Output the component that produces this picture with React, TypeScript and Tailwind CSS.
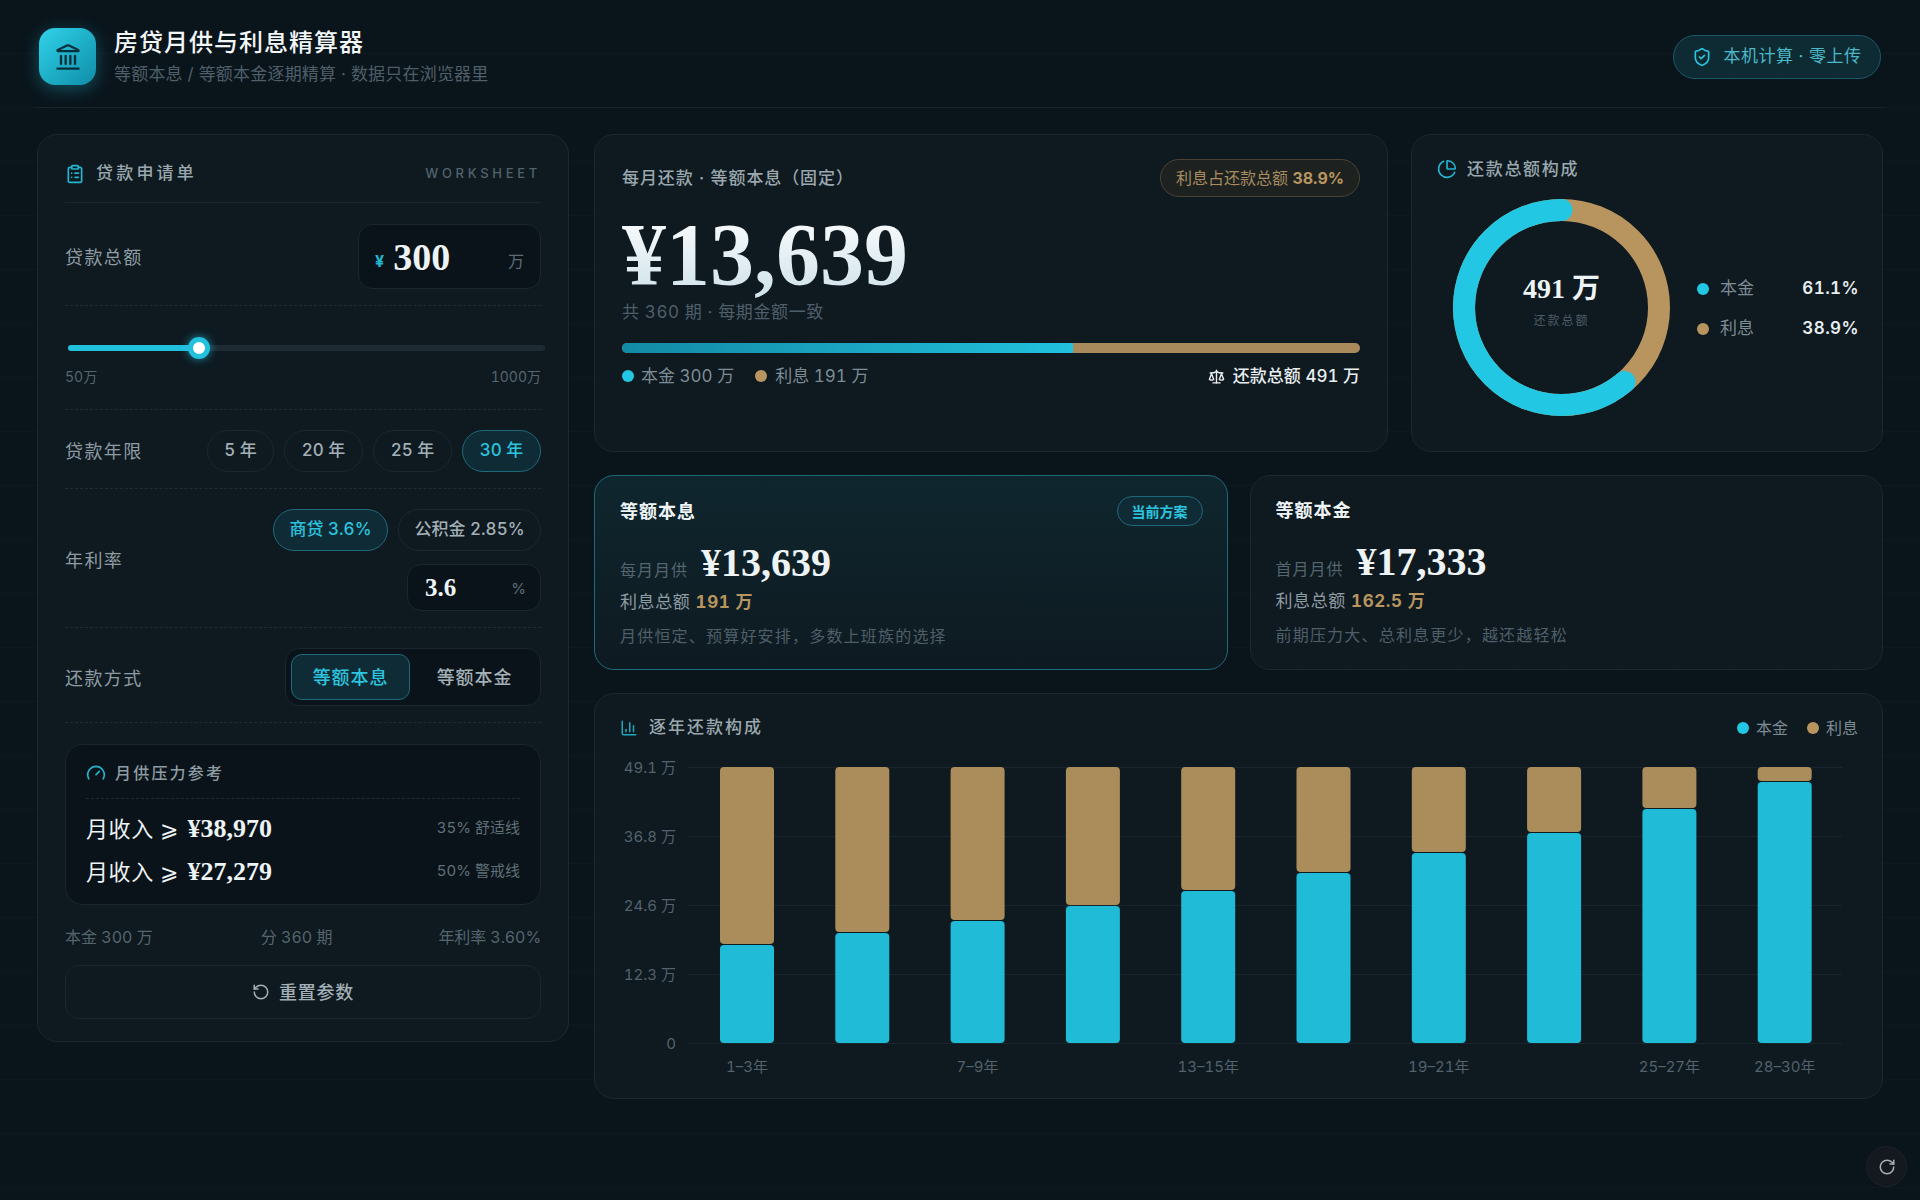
import {
  ChartColumn,
  ChartPie,
  ClipboardList,
  Gauge,
  Landmark,
  RotateCcw,
  RotateCw,
  Scale,
  ShieldCheck,
} from 'lucide-react';

const serif = "font-['Liberation_Serif','Noto_Sans_CJK_SC',serif]";

const yTicks = [
  { label: '49.1 万', y: 12 },
  { label: '36.8 万', y: 81 },
  { label: '24.6 万', y: 150 },
  { label: '12.3 万', y: 219 },
  { label: '0', y: 288 },
];

const principalHeights = [98, 110, 122, 137, 152, 170, 190, 210, 234, 261];
const xLabels = ['1–3年', '', '7–9年', '', '13–15年', '', '19–21年', '', '25–27年', '28–30年'];

function Pill({ children, active, className = '' }: { children: React.ReactNode; active?: boolean; className?: string }) {
  return (
    <div
      className={`flex h-[42px] items-center justify-center rounded-full border text-[17px] font-medium ${
        active ? 'border-[#1f6978] bg-[#0f2c36] text-[#2cc4de]' : 'border-[#1b2830] text-[#a3b0b6]'
      } ${className}`}
    >
      {children}
    </div>
  );
}

function Dot({ color }: { color: string }) {
  return <span className={`size-3 shrink-0 rounded-full ${color}`} />;
}

function IncomeRow({ amount, note }: { amount: string; note: string }) {
  return (
    <div className="flex h-[43px] items-center justify-between">
      <span className={`${serif} flex items-baseline text-[#eef4f6]`}>
        <span className="text-[22px] tracking-[0.6px]">月收入 ⩾&nbsp;</span>
        <span className="ml-[3px] text-[26px] font-bold">{amount}</span>
      </span>
      <span className="text-[15px] text-[#5f7078]">{note}</span>
    </div>
  );
}

function LoanForm() {
  const label = 'mt-[2px] text-[18px] tracking-[1.4px] text-[#8e9ca3]';
  const row = 'border-b border-dashed border-[#1f2c34]';

  return (
    <aside className="w-[532px] shrink-0 self-start rounded-[20px] border border-[#1a2831] bg-[#0e1920] px-[27px] pb-[22px] pt-[18px]">
      {/* Title */}
      <div className="flex h-[50px] items-center justify-between border-b border-[#1a272f] pb-2">
        <div className="flex items-center gap-[11px]">
          <ClipboardList size={20} strokeWidth={2} className="text-[#22b6d0]" />
          <span className="text-[17px] font-medium tracking-[3.2px] text-[#9aa8ae]">贷款申请单</span>
        </div>
        <span className="text-[13px] font-medium tracking-[3.7px] text-[#52636c]">WORKSHEET</span>
      </div>

      {/* Amount */}
      <div className={`flex items-center justify-between pb-[16px] pt-[21px] ${row}`}>
        <span className={label}>贷款总额</span>
        <div className="flex h-[65px] w-[183px] items-center rounded-[14px] border border-[#1a272f] bg-[#0a1319] pl-[16px] pr-[16px]">
          <span className="mt-[8px] text-[16px] font-bold text-[#22b6d0]">¥</span>
          <span className={`${serif} ml-[9px] text-[38px] font-bold leading-none text-[#eef4f6]`}>300</span>
          <span className="ml-auto mt-[8px] text-[16px] text-[#5e6e77]">万</span>
        </div>
      </div>

      {/* Slider */}
      <div className={`h-[104px] pt-[39px] ${row}`}>
        <div className="relative ml-[3px] mr-[-4px] h-[6px] rounded-full bg-[#1f2b32]">
          <div className="h-full w-[132px] rounded-full bg-[#22c1de]" />
          <div className="absolute left-[120px] top-[-8px] size-[22px] rounded-full border-[5px] border-[#22c1de] bg-white shadow-[0_0_10px_rgba(34,193,222,0.7)]" />
        </div>
        <div className="mt-[16px] flex justify-between text-[14px] leading-[20px] text-[#55656e]">
          <span>50万</span>
          <span>1000万</span>
        </div>
      </div>

      {/* Term */}
      <div className={`flex items-center justify-between pb-[16px] pt-[20px] ${row}`}>
        <span className="text-[18px] tracking-[1.4px] text-[#8e9ca3]">贷款年限</span>
        <div className="flex gap-[10px]">
          <Pill className="w-[67px]">5 年</Pill>
          <Pill className="w-[79px]">20 年</Pill>
          <Pill className="w-[79px]">25 年</Pill>
          <Pill active className="w-[79px]">30 年</Pill>
        </div>
      </div>

      {/* Rate */}
      <div className={`flex items-center justify-between pb-[16px] pt-[20px] ${row}`}>
        <span className="text-[18px] tracking-[1.4px] text-[#8e9ca3]">年利率</span>
        <div className="flex flex-col items-end gap-[13px]">
          <div className="flex gap-[10px]">
            <Pill active className="w-[115px]">商贷 3.6%</Pill>
            <Pill className="w-[143px]">公积金 2.85%</Pill>
          </div>
          <div className="flex h-[47px] w-[134px] items-center justify-between rounded-[14px] border border-[#1a272f] bg-[#0a1319] pl-[17px] pr-[14px]">
            <span className={`${serif} text-[25px] font-bold leading-none text-[#eef4f6]`}>3.6</span>
            <span className="mt-[4px] text-[15px] text-[#5e6e77]">%</span>
          </div>
        </div>
      </div>

      {/* Repayment */}
      <div className={`flex items-center justify-between pb-[16px] pt-[20px] ${row}`}>
        <span className={label}>还款方式</span>
        <div className="flex h-[58px] w-[256px] items-center rounded-[14px] border border-[#1a272f] bg-[#0a1319] p-[5px]">
          <div className="flex h-[46px] w-[119px] items-center justify-center rounded-[11px] border border-[#1f6978] bg-[#0f2c36] text-[18px] font-medium tracking-[0.9px] text-[#2cc4de]">
            等额本息
          </div>
          <div className="flex flex-1 items-center justify-center pl-[4px] text-[18px] font-medium tracking-[0.9px] text-[#a3b0b6]">等额本金</div>
        </div>
      </div>

      {/* Income reference */}
      <div className="mt-[21px] rounded-[18px] border border-[#1a272f] bg-[#0a1319] px-[20px] pb-[11px] pt-[14px]">
        <div className="flex items-center gap-[9px] border-b border-dashed border-[#1f2c34] pb-[11px]">
          <Gauge size={20} strokeWidth={2} className="text-[#22b6d0]" />
          <span className="text-[16px] font-medium leading-[28px] tracking-[2.2px] text-[#8e9ca3]">月供压力参考</span>
        </div>
        <div className="mt-[8px]">
          <IncomeRow amount="¥38,970" note="35% 舒适线" />
          <IncomeRow amount="¥27,279" note="50% 警戒线" />
        </div>
      </div>

      {/* Summary */}
      <div className="mt-[21px] flex justify-between text-[16px] leading-[22px] text-[#55656e]">
        <span>本金 300 万</span>
        <span className="ml-[2px]">分 360 期</span>
        <span className="tracking-[-0.1px]">年利率 3.60%</span>
      </div>

      <button className="mt-[17px] flex h-[54px] w-full items-center justify-center gap-[9px] rounded-[14px] border border-[#1a272f] text-[18px] font-medium tracking-[0.7px] text-[#a3b0b6]">
        <RotateCcw size={18} strokeWidth={2} />
        重置参数
      </button>
    </aside>
  );
}

function MonthlyCard() {
  return (
    <section className="h-[318px] w-[794px] shrink-0 rounded-[20px] border border-[#1a2831] bg-[#0e1920] px-[27px] pt-[24px]">
      <div className="flex items-center justify-between">
        <span className="mt-[2px] text-[17px] font-medium tracking-[0.9px] text-[#9aa8ae]">每月还款 · 等额本息（固定）</span>
        <span className="flex h-[38px] items-center rounded-full border border-[#4a4330] bg-[#1d2220] px-[15px] text-[16px] text-[#a88c60]">
          利息占还款总额&nbsp;<b className="font-bold text-[#b8955f]">38.9%</b>
        </span>
      </div>
      <div className={`${serif} mt-[8px] h-[94px] bg-gradient-to-b from-white to-[#cfe2ea] bg-clip-text text-[88px] font-bold leading-[100px] text-transparent`}>
        ¥13,639
      </div>
      <div className="mt-[1px] text-[17px] leading-[24px] tracking-[0.6px] text-[#4f5f69]">共 360 期 · 每期金额一致</div>
      <div className="mt-[19px] flex h-[10px] overflow-hidden rounded-full bg-[#a98a5c]">
        <div className="h-full w-[61.1%] bg-gradient-to-r from-[#128aa5] to-[#22c1de]" />
      </div>
      <div className="mt-[11px] flex items-center text-[17px] leading-[24px] text-[#7d8b92]">
        <Dot color="bg-[#22c7e4]" />
        <span className="ml-[7px]">本金 300 万</span>
        <span className="ml-[21px]"><Dot color="block bg-[#b8955f]" /></span>
        <span className="ml-[8px]">利息 191 万</span>
        <span className="ml-auto flex items-center gap-[8px] font-medium text-[#e8eef0]">
          <Scale size={17} strokeWidth={2} />
          还款总额 491 万
        </span>
      </div>
    </section>
  );
}

function DonutCard() {
  return (
    <section className="h-[318px] flex-1 rounded-[20px] border border-[#1a2831] bg-[#0e1920] pl-[25px] pr-[23px] pt-[21px]">
      <div className="flex items-center gap-[10px]">
        <ChartPie size={20} strokeWidth={2} className="text-[#22b6d0]" />
        <span className="text-[17px] font-medium leading-[26px] tracking-[1.7px] text-[#9aa8ae]">还款总额构成</span>
      </div>
      <div className="mt-[17px] flex items-center">
        <div className="relative ml-[16px] size-[217px] shrink-0">
          <svg viewBox="0 0 217 217" className="size-full">
            <circle cx="108.5" cy="108.5" r="97.5" fill="none" stroke="#b8955f" strokeWidth="22" />
            <circle
              cx="108.5"
              cy="108.5"
              r="97.5"
              fill="none"
              stroke="#22c7e4"
              strokeWidth="22"
              strokeLinecap="round"
              strokeDasharray="374.3 612.6"
              transform="rotate(-90 108.5 108.5) scale(1 -1) translate(0 -217)"
            />
          </svg>
          <div className="absolute inset-0 flex flex-col items-center justify-center pb-[15px]">
            <span className={`${serif} text-[28px] font-bold leading-[36px] text-[#eef4f6]`}>491 万</span>
            <span className="mt-[5px] text-[12px] leading-[18px] tracking-[2px] text-[#4d5d67]">还款总额</span>
          </div>
        </div>
        <div className="ml-[27px] flex flex-1 flex-col gap-[14px] pt-[2px] text-[17px]">
          <div className="flex h-[26px] items-center">
            <Dot color="bg-[#22c7e4]" />
            <span className="ml-[11px] text-[#7d8b92]">本金</span>
            <span className="ml-auto font-semibold tracking-[0.4px] text-[#e8eef0]">61.1%</span>
          </div>
          <div className="flex h-[26px] items-center">
            <Dot color="bg-[#b8955f]" />
            <span className="ml-[11px] text-[#7d8b92]">利息</span>
            <span className="ml-auto font-semibold tracking-[0.4px] text-[#e8eef0]">38.9%</span>
          </div>
        </div>
      </div>
    </section>
  );
}

function PlanCard({
  title,
  label,
  value,
  interest,
  note,
  current,
}: {
  title: string;
  label: string;
  value: string;
  interest: string;
  note: string;
  current?: boolean;
}) {
  return (
    <section
      className={`h-[195px] flex-1 rounded-[20px] border px-[25px] pt-[20px] ${
        current
          ? 'border-[#1e6a78] bg-gradient-to-b from-[#0f262e] to-[#0e1a21]'
          : 'border-[#1a2831] bg-[#0e1920]'
      }`}
    >
      <div className={`flex items-center justify-between ${current ? 'h-[30px]' : 'h-[29px]'}`}>
        <span className="text-[18px] font-semibold tracking-[1px] text-[#eef4f6]">{title}</span>
        {current && (
          <span className="mr-[-1px] flex h-[30px] w-[86px] items-center justify-center rounded-full border border-[#1f6978] bg-[#0f2c36] text-[14px] font-semibold text-[#2cc4de]">
            当前方案
          </span>
        )}
      </div>
      <div className="mt-[12px] flex h-[50px] items-end">
        <span className="mb-[6px] text-[16px] tracking-[1px] text-[#55656e]">{label}</span>
        <span className={`${serif} ml-[13px] text-[40px] font-bold leading-[50px] text-[#eef4f6]`}>{value}</span>
      </div>
      <div className="mt-[1px] text-[17px] leading-[26px] tracking-[0.6px] text-[#8e9ca3]">
        利息总额 <b className="font-bold text-[#b8955f]">{interest}</b>
      </div>
      <div className="mt-[9px] text-[16px] leading-[24px] tracking-[1.2px] text-[#4f5f69]">{note}</div>
    </section>
  );
}

function ChartCard() {
  return (
    <section className="h-[406px] rounded-[20px] border border-[#1a2831] bg-[#0e1920] pt-[21px]">
      <div className="flex h-[26px] items-center justify-between pl-[25px] pr-[24px]">
        <div className="flex items-center gap-[11px]">
          <ChartColumn size={18} strokeWidth={2} className="text-[#22a6bd]" />
          <span className="text-[17px] font-medium tracking-[2px] text-[#9aa8ae]">逐年还款构成</span>
        </div>
        <div className="flex items-center text-[16px] text-[#7d8b92]">
          <Dot color="bg-[#22c7e4]" />
          <span className="ml-[7px]">本金</span>
          <span className="ml-[19px]"><Dot color="block bg-[#b8955f]" /></span>
          <span className="ml-[7px]">利息</span>
        </div>
      </div>
      <svg width="1286" height="330" className="mt-[14px] block text-[15px]">
        {yTicks.map(tick => (
          <g key={tick.label}>
            <line x1="93" x2="1247" y1={tick.y + 0.5} y2={tick.y + 0.5} stroke="#1a262e" />
            <text x="81" y={tick.y + 6} textAnchor="end" fill="#53626c">{tick.label}</text>
          </g>
        ))}
        {principalHeights.map((height, i) => {
          const x = 125 + i * 115.3;
          const splitY = 288 - height;
          return (
            <g key={i}>
              <rect x={x} y={12} width={54} height={splitY - 12 - 1} rx={4} fill="#ab8d5c" />
              <rect x={x} y={splitY} width={54} height={height} rx={4} fill="#20bbd6" />
              {xLabels[i] && (
                <text x={x + 27} y={317} textAnchor="middle" fill="#53626c">{xLabels[i]}</text>
              )}
            </g>
          );
        })}
      </svg>
    </section>
  );
}

export default function App() {
  return (
    <div className="relative min-h-screen bg-[#0a141b] bg-[linear-gradient(rgba(130,200,220,0.022)_1px,transparent_1px),linear-gradient(90deg,rgba(130,200,220,0.008)_1px,transparent_1px)] bg-[size:54px_54px] bg-[position:0_-1px] px-[37px] pt-[27px] font-['Inter','Noto_Sans_CJK_SC',sans-serif] tabular-nums">
      {/* Header */}
      <header className="flex h-[81px] items-start justify-between border-b border-[#18242c]">
        <div className="flex items-center gap-[18px] pl-[2px]">
          <div className="flex size-[57px] items-center justify-center rounded-[16px] bg-gradient-to-br from-[#2fd3ea] to-[#0e8ea8] shadow-[0_4px_18px_rgba(34,193,222,0.35)]">
            <Landmark size={28} strokeWidth={2} className="text-[#07303c]" />
          </div>
          <div>
            <div className="text-[24px] font-medium leading-[32px] tracking-[1px] text-[#f2f6f7]">房贷月供与利息精算器</div>
            <div className="mt-[3px] text-[17px] leading-[24px] tracking-[0.2px] text-[#4f5f69]">等额本息 / 等额本金逐期精算 · 数据只在浏览器里</div>
          </div>
        </div>
        <div className="mr-[2px] mt-[8px] flex h-[44px] w-[208px] items-center justify-center gap-[11px] rounded-full border border-[#1e5866] bg-[#0e2b34] text-[17px] tracking-[0.5px] text-[#4cb8c8]">
          <ShieldCheck size={20} strokeWidth={2} className="text-[#2cc4de]" />
          本机计算 · 零上传
        </div>
      </header>

      {/* Body */}
      <main className="mt-[26px] flex items-start gap-[25px]">
        <LoanForm />
        <div className="flex min-w-0 flex-1 flex-col gap-[23px]">
          <div className="flex gap-[23px]">
            <MonthlyCard />
            <DonutCard />
          </div>
          <div className="flex gap-[22px]">
            <PlanCard
              current
              title="等额本息"
              label="每月月供"
              value="¥13,639"
              interest="191 万"
              note="月供恒定、预算好安排，多数上班族的选择"
            />
            <PlanCard
              title="等额本金"
              label="首月月供"
              value="¥17,333"
              interest="162.5 万"
              note="前期压力大、总利息更少，越还越轻松"
            />
          </div>
          <ChartCard />
        </div>
      </main>

      {/* Floating refresh button */}
      <button className="absolute bottom-[13px] right-[13px] flex size-[41px] items-center justify-center rounded-full border border-[#1c2228] bg-[#14191f] text-[#a6b0b4]">
        <RotateCw size={18} strokeWidth={2} />
      </button>
    </div>
  );
}
